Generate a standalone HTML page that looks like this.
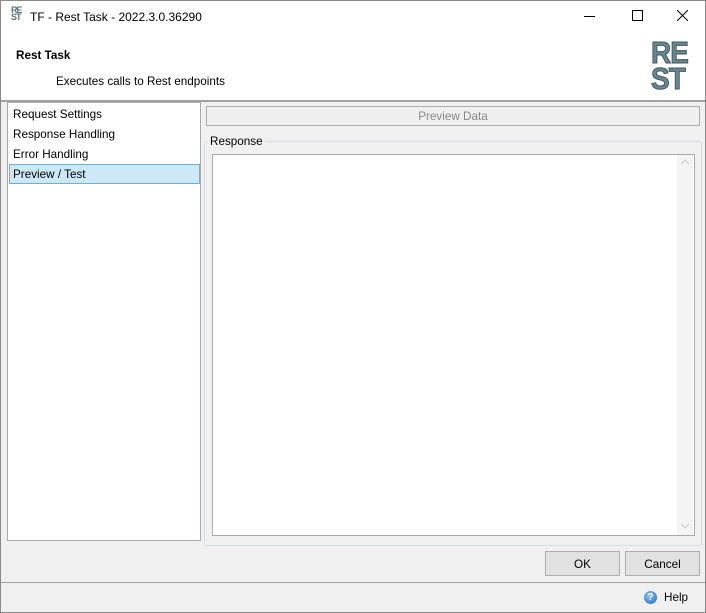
<!DOCTYPE html>
<html><head><style>
body{margin:0;width:706px;height:613px;overflow:hidden;font-family:"Liberation Sans",sans-serif;font-size:11.7px;color:#000;background:#fff}
.win{position:absolute;left:0;top:0;width:704px;height:611px;border:1px solid #888;background:#f0f0f0}
.abs{position:absolute}
</style></head><body>
<div class="win">
 <div class="abs" style="left:0;top:0;width:704px;height:99px;background:#fff;border-bottom:2px solid #a0a0a0"></div>
 <div class="abs" style="left:10px;top:6px;font:bold 9px/7px 'Liberation Sans';color:#5a6e78;letter-spacing:-1px">RE<br>ST</div>
 <div class="abs" style="left:29px;top:9px;font-size:12px">TF - Rest Task - 2022.3.0.36290</div>
 <div class="abs" style="left:583px;top:15px;width:11px;height:1px;background:#000"></div>
 <div class="abs" style="left:631px;top:9px;width:9px;height:9px;border:1px solid #000"></div>
 <svg class="abs" style="left:676px;top:9px" width="11" height="11"><path d="M0 0L11 11M11 0L0 11" stroke="#000"/></svg>
 <div class="abs" style="left:15px;top:48px;font-weight:bold">Rest Task</div>
 <div class="abs" style="left:55px;top:74px">Executes calls to Rest endpoints</div>
 <div class="abs" style="left:650px;top:39px;font:bold 31px/26px 'Liberation Sans';color:#6a8590;-webkit-text-stroke:1px #3f5660;letter-spacing:-1px;transform:scaleX(0.9);transform-origin:left">RE<br>ST</div>
 <div class="abs" style="left:6px;top:101px;width:192px;height:437px;background:#fff;border:1px solid #aaa"></div>
 <div class="abs" style="left:12px;top:107px">Request Settings</div>
 <div class="abs" style="left:12px;top:127px">Response Handling</div>
 <div class="abs" style="left:12px;top:147px">Error Handling</div>
 <div class="abs" style="left:8px;top:163px;width:189px;height:18px;background:#cce8f6;border:1px solid #6fb0d9"></div>
 <div class="abs" style="left:12px;top:167px">Preview / Test</div>
 <div class="abs" style="left:205px;top:105px;width:492px;height:18px;border:1px solid #adadad;background:#efefef;color:#888;text-align:center;line-height:20px">Preview Data</div>
 <div class="abs" style="left:203px;top:140px;width:496px;height:403px;border:1px solid #d8dde3;border-radius:3px"></div>
 <div class="abs" style="left:207px;top:134px;background:#f0f0f0;padding:0 2px">Response</div>
 <div class="abs" style="left:211px;top:153px;width:481px;height:380px;background:#fff;border:1px solid #aaa"></div>
 <div class="abs" style="left:676px;top:154px;width:16px;height:380px;background:#f4f4f4"></div>
 <svg class="abs" style="left:679px;top:158px" width="10" height="6"><path d="M1 5L5 1L9 5" stroke="#ccc" fill="none"/></svg>
 <svg class="abs" style="left:679px;top:522px" width="10" height="6"><path d="M1 1L5 5L9 1" stroke="#ccc" fill="none"/></svg>
 <div class="abs" style="left:544px;top:550px;width:73px;height:23px;border:1px solid #adadad;background:#e1e1e1;text-align:center;line-height:25px">OK</div>
 <div class="abs" style="left:624px;top:550px;width:73px;height:23px;border:1px solid #adadad;background:#e1e1e1;text-align:center;line-height:25px">Cancel</div>
 <div class="abs" style="left:0;top:581px;width:704px;height:1px;background:#a0a0a0"></div>
 <div class="abs" style="left:643px;top:590px;width:13px;height:13px;border-radius:50%;background:radial-gradient(circle at 40% 35%,#8cc4f4,#1f64c4);color:#fff;font:bold 10px/13px 'Liberation Sans';text-align:center">?</div>
 <div class="abs" style="left:663px;top:590px">Help</div>
</div>
</body></html>
